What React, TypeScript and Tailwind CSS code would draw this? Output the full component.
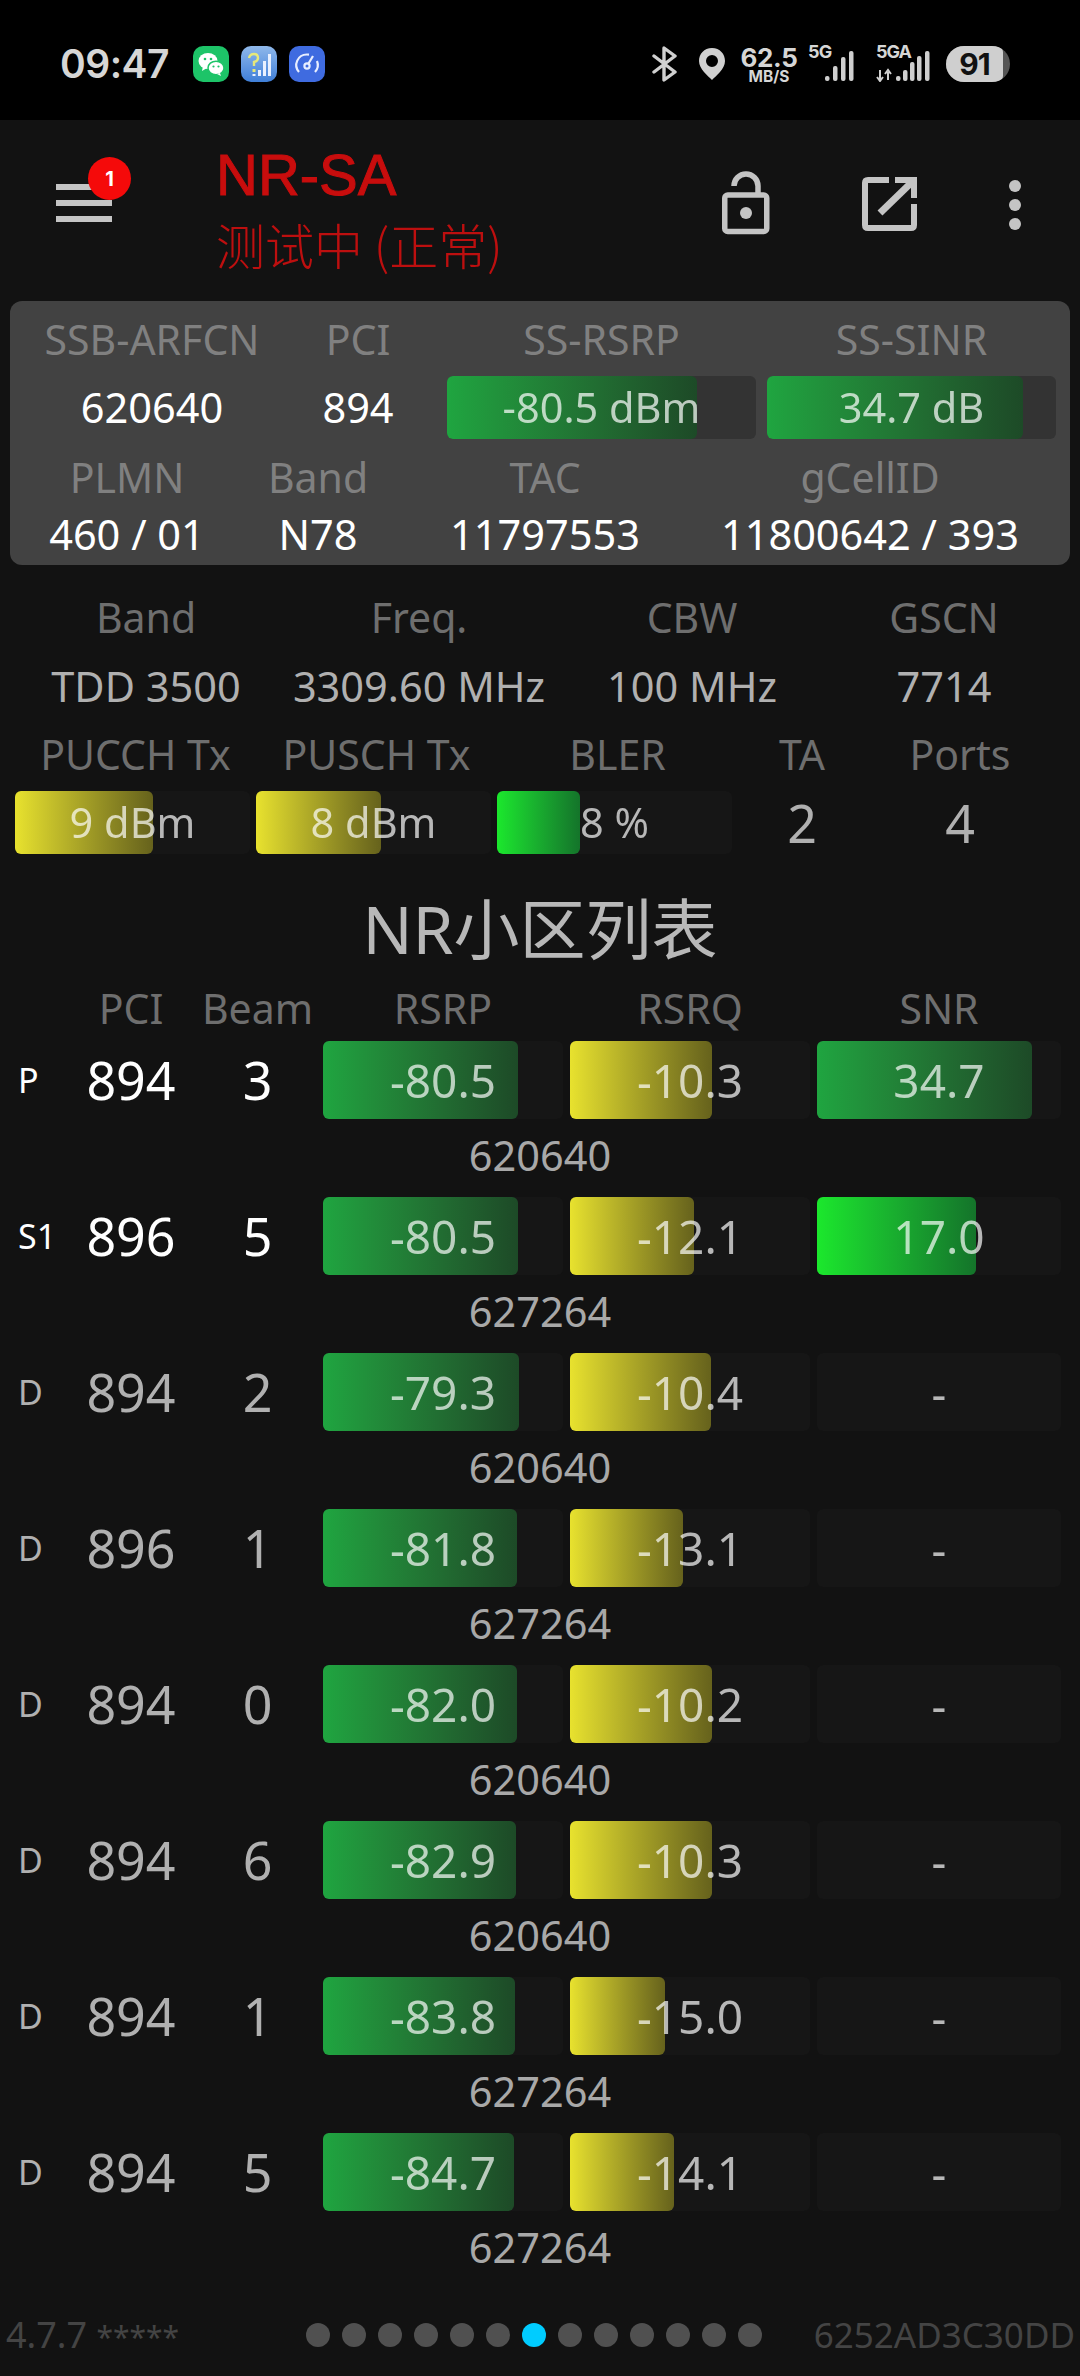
const SANS = "font-['Noto_Sans','Noto_Sans_CJK_SC',sans-serif]";

const GREEN = "bg-gradient-to-r from-[#1fa540] to-[#1d4a27]";
const YELLOW = "bg-gradient-to-r from-[#e8e22e] to-[#66621c]";
const LIME = "bg-gradient-to-r from-[#1be82c] to-[#14742a]";

function Bar({ w, fill, text, h, track, size, color }: { w: number; fill: string; text: string; h: string; track: string; size: string; color: string }) {
  return (
    <div className={`relative ${h} ${track} rounded-[6px] isolate`}>
      {w > 0 && <div className={`h-full rounded-[6px] ${fill}`} style={{ width: w }} />}
      <div className={`absolute inset-0 flex items-center justify-center whitespace-nowrap mix-blend-screen ${size} ${color}`}>{text}</div>
    </div>
  );
}

type Row = { tag: string; pci: string; beam: string; rsrp: string; rw: number; rsrq: string; qw: number; snr?: string; sw?: number; sf?: string; arfcn: string; on?: boolean };

const ROWS: Row[] = [
  { tag: "P", pci: "894", beam: "3", rsrp: "-80.5", rw: 195, rsrq: "-10.3", qw: 142, snr: "34.7", sw: 215, sf: GREEN, arfcn: "620640", on: true },
  { tag: "S1", pci: "896", beam: "5", rsrp: "-80.5", rw: 195, rsrq: "-12.1", qw: 124, snr: "17.0", sw: 159, sf: LIME, arfcn: "627264", on: true },
  { tag: "D", pci: "894", beam: "2", rsrp: "-79.3", rw: 196, rsrq: "-10.4", qw: 141, arfcn: "620640" },
  { tag: "D", pci: "896", beam: "1", rsrp: "-81.8", rw: 194, rsrq: "-13.1", qw: 113, arfcn: "627264" },
  { tag: "D", pci: "894", beam: "0", rsrp: "-82.0", rw: 194, rsrq: "-10.2", qw: 142, arfcn: "620640" },
  { tag: "D", pci: "894", beam: "6", rsrp: "-82.9", rw: 193, rsrq: "-10.3", qw: 142, arfcn: "620640" },
  { tag: "D", pci: "894", beam: "1", rsrp: "-83.8", rw: 192, rsrq: "-15.0", qw: 95, arfcn: "627264" },
  { tag: "D", pci: "894", beam: "5", rsrp: "-84.7", rw: 191, rsrq: "-14.1", qw: 104, arfcn: "627264" },
];

function Signal({ x, tops }: { x: number[]; tops: number[] }) {
  return (
    <svg width="100%" height="100%" className="absolute inset-0">
      {x.map((v, i) => (
        <rect key={i} x={v} y={tops[i]} width="4.5" height={35 - tops[i]} rx="2" fill="#cfcfcf" />
      ))}
    </svg>
  );
}

function StatusBar() {
  return (
    <div className="h-[120px] bg-black flex items-center pl-[60px] pr-[70px] pt-[8px] font-['Inter',sans-serif] text-[#d6d6d6]">
      <div className="w-[133px] text-[39px] leading-[44px] font-semibold tracking-[-0.5px]">09:47</div>
      <div className="flex gap-[12px]">
        <div className="w-[36px] h-[36px] rounded-[10px] bg-[#1dc468]">
          <svg viewBox="0 0 36 36" width="36" height="36">
            <ellipse cx="15" cy="15" rx="9.5" ry="8" fill="#fff" />
            <path d="M10 20 L9 25 L14 22Z" fill="#fff" />
            <ellipse cx="23" cy="22" rx="8" ry="6.8" fill="#fff" stroke="#1dc468" strokeWidth="1.5" />
            <path d="M27 27 L28 30 L24 28Z" fill="#fff" />
            <circle cx="12" cy="13" r="1.3" fill="#1dc468" />
            <circle cx="18" cy="13" r="1.3" fill="#1dc468" />
            <circle cx="20.5" cy="20.5" r="1.1" fill="#1dc468" />
            <circle cx="25.5" cy="20.5" r="1.1" fill="#1dc468" />
          </svg>
        </div>
        <div className="w-[36px] h-[36px] rounded-[10px] bg-gradient-to-b from-[#8fb8ea] to-[#3f7fd8]">
          <svg viewBox="0 0 36 36" width="36" height="36">
            <path d="M8 12 Q9 8 13 8 Q17 8 17 12 Q17 15 13 16 L13 20" fill="none" stroke="#e6e87a" strokeWidth="2.4" />
            <rect x="11.5" y="23" width="3" height="3" fill="#e6e87a" />
            <rect x="11.5" y="28" width="3" height="2" fill="#e8f0ff" />
            <rect x="17" y="24" width="3" height="6" fill="#e8f0ff" />
            <rect x="22" y="15" width="3" height="15" fill="#e8f0ff" />
            <rect x="27" y="8" width="3" height="22" fill="#e8f0ff" />
          </svg>
        </div>
        <div className="w-[36px] h-[36px] rounded-[10px] bg-[#3f6be0]">
          <svg viewBox="0 0 36 36" width="36" height="36" fill="none" stroke="#e8eeff" strokeWidth="2.2">
            <path d="M10 26 A10.5 10.5 0 0 1 18 8.5 L20 8.7" />
            <path d="M26 26 A10.5 10.5 0 0 0 28 15" />
            <circle cx="18" cy="20" r="2.6" />
            <path d="M19.5 17.5 L24 10" />
          </svg>
        </div>
      </div>
      <div className="ml-auto flex items-center">
        <svg width="26" height="36" viewBox="0 0 26 36" fill="none" stroke="#d0d0d0" strokeWidth="3.4" strokeLinejoin="round" strokeLinecap="round" className="mr-[20px]">
          <path d="M2 10 L23 26 L12 34 L12 2 L23 10 L2 26" />
        </svg>
        <svg width="28" height="34" viewBox="0 0 28 34" className="mr-[13px]">
          <path fillRule="evenodd" d="M14 1 C6 1 1 7 1 14 C1 22 10 29 14 33 C18 29 27 22 27 14 C27 7 22 1 14 1Z M14 8 A6 6 0 1 1 14 20 A6 6 0 1 1 14 8Z" fill="#d0d0d0" />
        </svg>
        <div className="w-[60px] flex flex-col items-center font-bold mr-[9px]">
          <div className="text-[26px] leading-[24px] tracking-[-0.4px]">62.5</div>
          <div className="text-[15.5px] leading-[13px]">MB/S</div>
        </div>
        <div className="relative w-[52px] h-[36px] mr-[16px]">
          <span className="absolute left-0 top-[-4px] text-[18px] leading-[20px] font-bold tracking-[-0.8px]">5G</span>
          <Signal x={[17, 25, 33, 41]} tops={[30, 20, 11, 5]} />
        </div>
        <div className="relative w-[54px] h-[36px] mr-[16px]">
          <span className="absolute left-0 top-[-4px] text-[18px] leading-[20px] font-bold tracking-[-1px]">5GA</span>
          <svg width="16" height="14" className="absolute left-0 bottom-0" viewBox="0 0 16 14" fill="none" stroke="#d0d0d0" strokeWidth="2">
            <path d="M4 2 V12 M1 9 L4 13 L7 9" />
            <path d="M12 12 V4 M9 6 L12 2 L15 6" />
          </svg>
          <Signal x={[20, 27, 34, 41, 49]} tops={[30, 24, 16, 10, 5]} />
        </div>
        <div className="relative w-[64px] h-[36px] rounded-[18px] bg-[#555] overflow-hidden">
          <div className="h-full w-[57px] rounded-r-[6px] bg-[#cfcfcf] flex items-center justify-center text-[#111] text-[30px] font-bold tracking-[-1px]">91</div>
        </div>
      </div>
    </div>
  );
}

function Toolbar() {
  return (
    <div className="h-[170px] flex items-start">
      <div className="relative w-[56px] ml-[56px] mt-[64px] flex flex-col gap-[10px]">
        <div className="h-[6px] bg-[#c4c4c4]" />
        <div className="h-[6px] bg-[#c4c4c4]" />
        <div className="h-[6px] bg-[#c4c4c4]" />
        <div className="absolute left-[32px] top-[-27px] w-[43px] h-[43px] rounded-full bg-[#f50a0a] flex items-center justify-center text-white text-[20px] font-bold font-['Inter',sans-serif]">1</div>
      </div>
      <div className="ml-[104px] mt-[22px] flex flex-col">
        <div className="font-['Liberation_Sans',sans-serif] text-[58px] leading-[66px] text-[#c80d0d] [-webkit-text-stroke:1px_#c80d0d]">NR-SA</div>
        <div className="font-['Noto_Sans_CJK_SC','Noto_Sans',sans-serif] text-[49px] leading-[64px] mt-[4px] text-[#bd0f0f] font-light whitespace-nowrap">测试中 (正常)</div>
      </div>
      <div className="ml-auto flex items-start mr-[59px] mt-[51px]">
        <svg width="50" height="64" viewBox="0 0 50 64" fill="none" stroke="#c4c4c4" strokeWidth="5.5" className="mr-[90px]">
          <rect x="3.75" y="24" width="42" height="36.5" rx="3" />
          <path d="M13 15 A12 12 0 0 1 37 15 V23" />
          <circle cx="25" cy="42" r="6" fill="#c4c4c4" stroke="none" />
        </svg>
        <svg width="56" height="56" viewBox="0 0 56 56" fill="none" stroke="#c4c4c4" strokeWidth="6" className="mr-[92px] mt-[5px]">
          <path d="M28 4 H7 Q4 4 4 7 V49 Q4 52 7 52 H50 Q53 52 53 49 V28" />
          <path d="M34 4 H53 V22" />
          <path d="M52 5 L19 37" strokeWidth="7" />
        </svg>
        <div className="flex flex-col gap-[7px] mt-[9px]">
          <div className="w-[12px] h-[12px] rounded-full bg-[#c4c4c4]" />
          <div className="w-[12px] h-[12px] rounded-full bg-[#c4c4c4]" />
          <div className="w-[12px] h-[12px] rounded-full bg-[#c4c4c4]" />
        </div>
      </div>
    </div>
  );
}

const L = "flex items-center justify-center whitespace-nowrap text-[#6e6e6e] text-[41px]";
const CL = "flex items-center justify-center whitespace-nowrap text-[#808080] text-[41px]";
const V = "flex items-center justify-center whitespace-nowrap";

export default function App() {
  return (
    <div className={`w-[1080px] h-[2376px] overflow-hidden bg-[#121212] text-[41.5px] ${SANS}`}>
      <StatusBar />
      <Toolbar />

      <div className="mt-[11px] mx-[10px] h-[264px] rounded-[12px] bg-[#424242]">
        <div className="grid grid-cols-[284px_128px_334px_300px] pt-[11px]">
          <div className={`${CL} h-[56px]`}>SSB-ARFCN</div>
          <div className={`${CL} h-[56px]`}>PCI</div>
          <div className={`${CL} h-[56px] pl-[25px]`}>SS-RSRP</div>
          <div className={`${CL} h-[56px] pl-[11px]`}>SS-SINR</div>
          <div className={`${V} h-[63px] text-white mt-[8px]`}>620640</div>
          <div className={`${V} h-[63px] text-white mt-[8px]`}>894</div>
          <div className="pl-[25px] mt-[8px]">
            <Bar w={250} fill={GREEN} text="-80.5 dBm" h="h-[63px]" track="bg-[#333333]" size="text-[41.5px]" color="text-[#b4b4b4]" />
          </div>
          <div className="pl-[11px] mt-[8px]">
            <Bar w={256} fill={GREEN} text="34.7 dB" h="h-[63px]" track="bg-[#333333]" size="text-[41.5px]" color="text-[#b4b4b4]" />
          </div>
        </div>
        <div className="grid grid-cols-[234px_148px_306px_344px] mt-[11px]">
          <div className={`${CL} h-[56px]`}>PLMN</div>
          <div className={`${CL} h-[56px]`}>Band</div>
          <div className={`${CL} h-[56px]`}>TAC</div>
          <div className={`${CL} h-[56px]`}>gCellID</div>
          <div className={`${V} h-[56px] text-white`}>460 / 01</div>
          <div className={`${V} h-[56px] text-white`}>N78</div>
          <div className={`${V} h-[56px] text-white`}>11797553</div>
          <div className={`${V} h-[56px] text-white`}>11800642 / 393</div>
        </div>
      </div>

      <div className="grid grid-cols-[292px_254px_292px_212px] mt-[25px] text-[#b0b0b0]">
        <div className={`${L} h-[56px]`}>Band</div>
        <div className={`${L} h-[56px]`}>Freq.</div>
        <div className={`${L} h-[56px]`}>CBW</div>
        <div className={`${L} h-[56px]`}>GSCN</div>
        <div className={`${V} h-[56px] mt-[12px]`}>TDD 3500</div>
        <div className={`${V} h-[56px] mt-[12px]`}>3309.60 MHz</div>
        <div className={`${V} h-[56px] mt-[12px]`}>100 MHz</div>
        <div className={`${V} h-[56px] mt-[12px]`}>7714</div>
      </div>

      <div className="grid grid-cols-[241px_241px_241px_128px_188px] pl-[15px] mt-[13px] text-[#b0b0b0]">
        <div className={`${L} h-[56px]`}>PUCCH Tx</div>
        <div className={`${L} h-[56px]`}>PUSCH Tx</div>
        <div className={`${L} h-[56px]`}>BLER</div>
        <div className={`${L} h-[56px]`}>TA</div>
        <div className={`${L} h-[56px]`}>Ports</div>
        <div className="pr-[6px] mt-[8px]"><Bar w={138} fill={YELLOW} text="9 dBm" h="h-[63px]" track="bg-[#161616]" size="text-[41.5px]" color="text-[#b0b0b0]" /></div>
        <div className="pr-[6px] mt-[8px]"><Bar w={125} fill={YELLOW} text="8 dBm" h="h-[63px]" track="bg-[#161616]" size="text-[41.5px]" color="text-[#b0b0b0]" /></div>
        <div className="pr-[6px] mt-[8px]"><Bar w={83} fill={LIME} text="8 %" h="h-[63px]" track="bg-[#161616]" size="text-[41.5px]" color="text-[#b0b0b0]" /></div>
        <div className={`${V} h-[63px] text-[52px] mt-[8px]`}>2</div>
        <div className={`${V} h-[63px] text-[52px] mt-[8px]`}>4</div>
      </div>

      <div className={`${V} h-[84px] mt-[32px] text-[66px] text-[#b8b8b8]`}>NR小区列表</div>

      <div className="grid grid-cols-[70px_122px_131px_247px_247px_247px] h-[56px] mt-[8px]">
        <div />
        <div className={L}>PCI</div>
        <div className={L}>Beam</div>
        <div className={`${L} pr-[7px]`}>RSRP</div>
        <div className={`${L} pr-[7px]`}>RSRQ</div>
        <div className={`${L} pr-[3px]`}>SNR</div>
      </div>

      <div className="mt-[7px]">
        {ROWS.map((r, i) => (
          <div key={i} className="h-[156px]">
            <div className={`grid grid-cols-[70px_122px_131px_247px_247px_247px] h-[78px] ${r.on ? "text-white" : "text-[#b0b0b0]"}`}>
              <div className="flex items-center pl-[18px] text-[34px]">{r.tag}</div>
              <div className="flex items-center justify-center text-[52px]">{r.pci}</div>
              <div className="flex items-center justify-center text-[52px]">{r.beam}</div>
              <div className="pr-[7px]"><Bar w={r.rw} fill={GREEN} text={r.rsrp} h="h-[78px]" track="bg-[#161616]" size="text-[46px]" color="text-[#b0b0b0]" /></div>
              <div className="pr-[7px]"><Bar w={r.qw} fill={YELLOW} text={r.rsrq} h="h-[78px]" track="bg-[#161616]" size="text-[46px]" color="text-[#b0b0b0]" /></div>
              <div className="pr-[3px]"><Bar w={r.sw ?? 0} fill={r.sf ?? ""} text={r.snr ?? "-"} h="h-[78px]" track="bg-[#161616]" size="text-[46px]" color="text-[#b0b0b0]" /></div>
            </div>
            <div className={`${V} h-[72px] text-[#a8a8a8]`}>{r.arfcn}</div>
          </div>
        ))}
      </div>

      <div className="flex items-center h-[56px] mt-[18px] text-[#444444]">
        <div className="w-[306px] pl-[6px] text-[36px] whitespace-nowrap">4.7.7 <span className="text-[30px]">*****</span></div>
        <div className="flex gap-[12px]">
          {[0, 1, 2, 3, 4, 5, 6, 7, 8, 9, 10, 11, 12].map((d) => (
            <div key={d} className={`w-[24px] h-[24px] rounded-full ${d === 6 ? "bg-[#00ccff]" : "bg-[#505050]"}`} />
          ))}
        </div>
        <div className="ml-auto pr-[5px] text-[35px]">6252AD3C30DD</div>
      </div>
    </div>
  );
}
